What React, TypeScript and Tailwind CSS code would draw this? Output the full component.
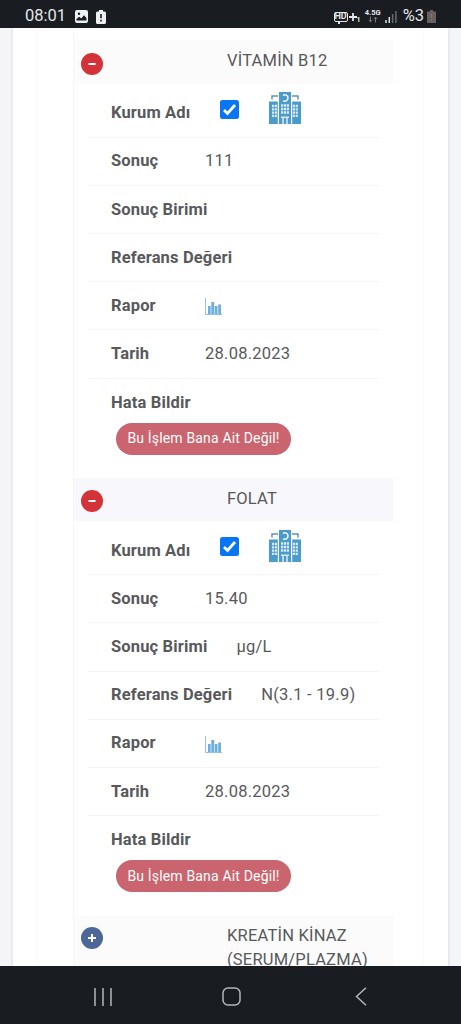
import React from 'react';

type Result = {
  name: string;
  value?: string;
  unit?: string;
  reference?: string;
  date?: string;
};

const results: Result[] = [
  { name: 'VİTAMİN B12', value: '111', date: '28.08.2023' },
  { name: 'FOLAT', value: '15.40', unit: 'µg/L', reference: 'N(3.1 - 19.9)', date: '28.08.2023' },
];

const StatusBar = () => (
  <header className="relative z-10 flex h-7 shrink-0 items-center bg-[#191c20] pt-[5px] pl-[25px] text-[#e4e6e8]">
    <span className="text-[16.5px] leading-none">08:01</span>
    <svg className="ml-[9px]" width="13" height="13" viewBox="0 0 13 13">
      <rect width="13" height="13" rx="2" fill="#eef0f1" />
      <circle cx="4" cy="3.7" r="1.2" fill="#191c20" />
      <path d="M1.5 10.5V9l2.7-2.2 2 1.6L9 5.3l2.5 2.8v2.4z" fill="#191c20" />
    </svg>
    <svg className="ml-[8px]" width="10" height="14" viewBox="0 0 10 14">
      <path d="M3 0h4v1.5h1.5A1.5 1.5 0 0 1 10 3v9.500A1.500 1.500 0 0 1 8.500 14h-7A1.500 1.500 0 0 1 0 12.500V3a1.500 1.500 0 0 1 1.500-1.500H3z" fill="#eef0f1" />
      <path d="M5 4v4.300M5 9.800v1.600" stroke="#191c20" strokeWidth="1.600" />
    </svg>
    <div className="ml-auto flex items-center pr-[25px]">
      <div className="flex items-center">
        <span className="relative flex h-[10px] w-[14px] items-center justify-center rounded-[2px] border border-[#e4e6e8] text-[9px] font-bold leading-none">
          HD
          <i className="absolute -bottom-[3px] left-[3px] h-[3px] w-[2px] bg-[#e4e6e8]" />
        </span>
        <svg className="ml-[1px]" width="8" height="8" viewBox="0 0 8 8">
          <path d="M4 0v8M0 4h8" stroke="#e4e6e8" strokeWidth="1.8" />
        </svg>
        <span className="mt-[7px] text-[7px] font-bold leading-none">1</span>
      </div>
      <div className="ml-[4px] mt-[-2px] flex w-4 flex-col items-center">
        <span className="text-[7.5px] font-bold leading-[7px]">4.5G</span>
        <svg width="10" height="7" viewBox="0 0 10 7" fill="none" stroke="#777b7e" strokeWidth="1">
          <path d="M2.500 .5v5M.7 4l1.800 1.800L4.300 4M7.500 6.500v-5M5.700 3l1.800-1.800L9.300 3" />
        </svg>
      </div>
      <svg className="ml-[4px]" width="12" height="13" viewBox="0 0 12 13">
        <path d="M1 10v3M4.300 7v6" stroke="#e4e6e8" strokeWidth="1.500" />
        <path d="M7.600 4v9M10.900 1v12" stroke="#676b6e" strokeWidth="1.500" />
      </svg>
      <span className="ml-[6px] text-[16.5px] leading-none">%3</span>
      <svg className="ml-[3px]" width="9" height="13" viewBox="0 0 9 13">
        <path d="M3 0h3v1.500h3V13H0V1.500h3z" fill="#67605f" />
        <path d="M4.500 4v4M4.500 9.500V11" stroke="#847c7a" />
      </svg>
    </div>
  </header>
);

const HospitalIcon = () => (
  <svg width="32" height="32" viewBox="0 0 32 32">
    <g fill="#4c9bcd">
      <path d="M0 9.500h8.800V32H0zM23.200 9.500H32V32h-8.800z" />
      <path d="M10 0h12v32H10z" />
    </g>
    <path d="M3 7.500V4h6M29 7.500V4h-6" fill="none" stroke="#5b96bb" strokeWidth="1.500" />
    <path d="M14 3.300c2-1 5-.2 5 2.700s-3 3.900-5 2.900" fill="none" stroke="#fff" strokeWidth="1.500" />
    <g fill="none" stroke="#d8eaf5" strokeWidth="2.300">
      <path d="M12 13.500h8M12 17h8M12 20.500h8" strokeDasharray="2.200 .7" />
      <path d="M3 14h5.200M3 17.300h5.200M3 20.600h5.200M3 23.900h5.200M23.800 14H29M23.800 17.300H29M23.800 20.600H29M23.800 23.900H29" strokeDasharray="2.200 .7" />
      <path d="M12 25.200h8M14 25v7M18 25v7" strokeWidth="1.500" />
    </g>
  </svg>
);

const ChartIcon = () => (
  <svg width="17" height="17" viewBox="0 0 17 17">
    <path d="M.5 0v16.500H17" fill="none" stroke="#8cc3e6" />
    <path d="M3 8h2.700v8H3zM6.300 4h2.900v12H6.300zM9.800 8h2.700v8H9.800zM13.200 6.500H16V16h-2.800z" fill="#6eafe0" />
  </svg>
);

const ToggleIcon = ({ open }: { open: boolean }) => (
  <svg className="ml-[7px] mt-[4px] shrink-0" width="22" height="22" viewBox="0 0 22 22">
    <circle cx="11" cy="11" r="11" fill={open ? '#d33338' : '#4d6898'} />
    <path d={open ? 'M7.500 11h7' : 'M7 11h8M11 7v8'} stroke="#fff" strokeWidth="2" />
  </svg>
);

const Row = ({ label, children }: { label: string; children?: React.ReactNode }) => (
  <li className="flex h-[48.15px] items-center border-b border-[#f4f4f5] pl-[23px] pt-px tracking-[0.25px]">
    <span className="mr-[29px] min-w-[65px] whitespace-nowrap font-bold tracking-[0.15px]">{label}</span>
    {children}
  </li>
);

const ResultItem = ({ result, shaded }: { result: Result; shaded: boolean }) => (
  <section className="h-[437.5px] shrink-0">
    <div className={`flex h-[43.5px] w-[319px] items-center ${shaded ? 'bg-[#f8f8fc]' : 'bg-[#fbfbfc]'}`}>
      <ToggleIcon open />
      <h2 className="ml-[124px] tracking-[0.2px]">{result.name}</h2>
    </div>
    <ul className="ml-[14px] w-[291px]">
      <li className="flex h-[54.3px] items-center border-b border-[#f4f4f5] pl-[23px]">
        <span className="mt-[7px] w-[109px] font-bold tracking-[0.15px]">Kurum Adı</span>
        <svg className="-mt-[2px]" width="19" height="19" viewBox="0 0 19 19">
          <rect width="19" height="19" rx="2.500" fill="#0875f5" />
          <path d="M4 10l3.500 3.500L15 5" fill="none" stroke="#fff" strokeWidth="2.800" />
        </svg>
        <span className="-mt-[4px] ml-[30px]"><HospitalIcon /></span>
      </li>
      <Row label="Sonuç">{result.value}</Row>
      <Row label="Sonuç Birimi">{result.unit}</Row>
      <Row label="Referans Değeri">{result.reference}</Row>
      <Row label="Rapor">
        <span className="mt-[1px]"><ChartIcon /></span>
      </Row>
      <Row label="Tarih">{result.date}</Row>
      <li className="pl-[23px] pt-[12px]">
        <span className="block font-bold leading-6 tracking-[0.15px]">Hata Bildir</span>
        <button className="ml-[5px] mt-[8px] flex h-[32px] w-[175px] items-center justify-center whitespace-nowrap rounded-full bg-[#ca646e] text-[14px] tracking-[0.17px] text-white">
          Bu İşlem Bana Ait Değil!
        </button>
      </li>
    </ul>
  </section>
);

const App: React.FC = () => {
  return (
    <div className="flex h-[1024px] w-[461px] flex-col overflow-hidden bg-[#f4f5f8] font-[Roboto,sans-serif] text-[16.5px] text-[#58595b]">
      <StatusBar />
      <main className="mx-[13px] flex min-h-0 flex-1 overflow-hidden bg-white shadow-[0_0_3px_#cfd1d5]">
        <div className="ml-[24px] w-[387px] border-x border-[#fafafb] pl-[35px]">
          <div className="flex flex-col border-l border-[#f6f6f7] pt-[12px]">
            {results.map((result, i) => (
              <ResultItem key={result.name} result={result} shaded={i % 2 === 1} />
            ))}
            <div className="flex h-[60px] w-[319px] shrink-0 items-start bg-[#fbfbfc] pt-[8px]">
              <ToggleIcon open={false} />
              <h2 className="ml-[124px] mt-px leading-6 tracking-[0.2px]">KREATİN KİNAZ<br />(SERUM/PLAZMA)</h2>
            </div>
          </div>
        </div>
      </main>
      <nav className="relative z-10 flex h-[58px] shrink-0 items-center bg-[#191c20] pt-[3px] pl-[94px]">
        <svg width="18" height="18" viewBox="0 0 18 18" stroke="#b4b6b8" strokeWidth="1.500">
          <path d="M1 0v18M9 0v18M17 0v18" />
        </svg>
        <svg className="ml-[110px]" width="19" height="19" viewBox="0 0 19 19" fill="none" stroke="#b4b6b8" strokeWidth="1.500">
          <rect x="1" y="1" width="17" height="17" rx="5" />
        </svg>
        <svg className="ml-[114px]" width="12" height="19" viewBox="0 0 12 19" fill="none" stroke="#b4b6b8" strokeWidth="1.500">
          <path d="M11 .7L1.500 9.500l9.500 8.800" />
        </svg>
      </nav>
    </div>
  );
};

export default App;
